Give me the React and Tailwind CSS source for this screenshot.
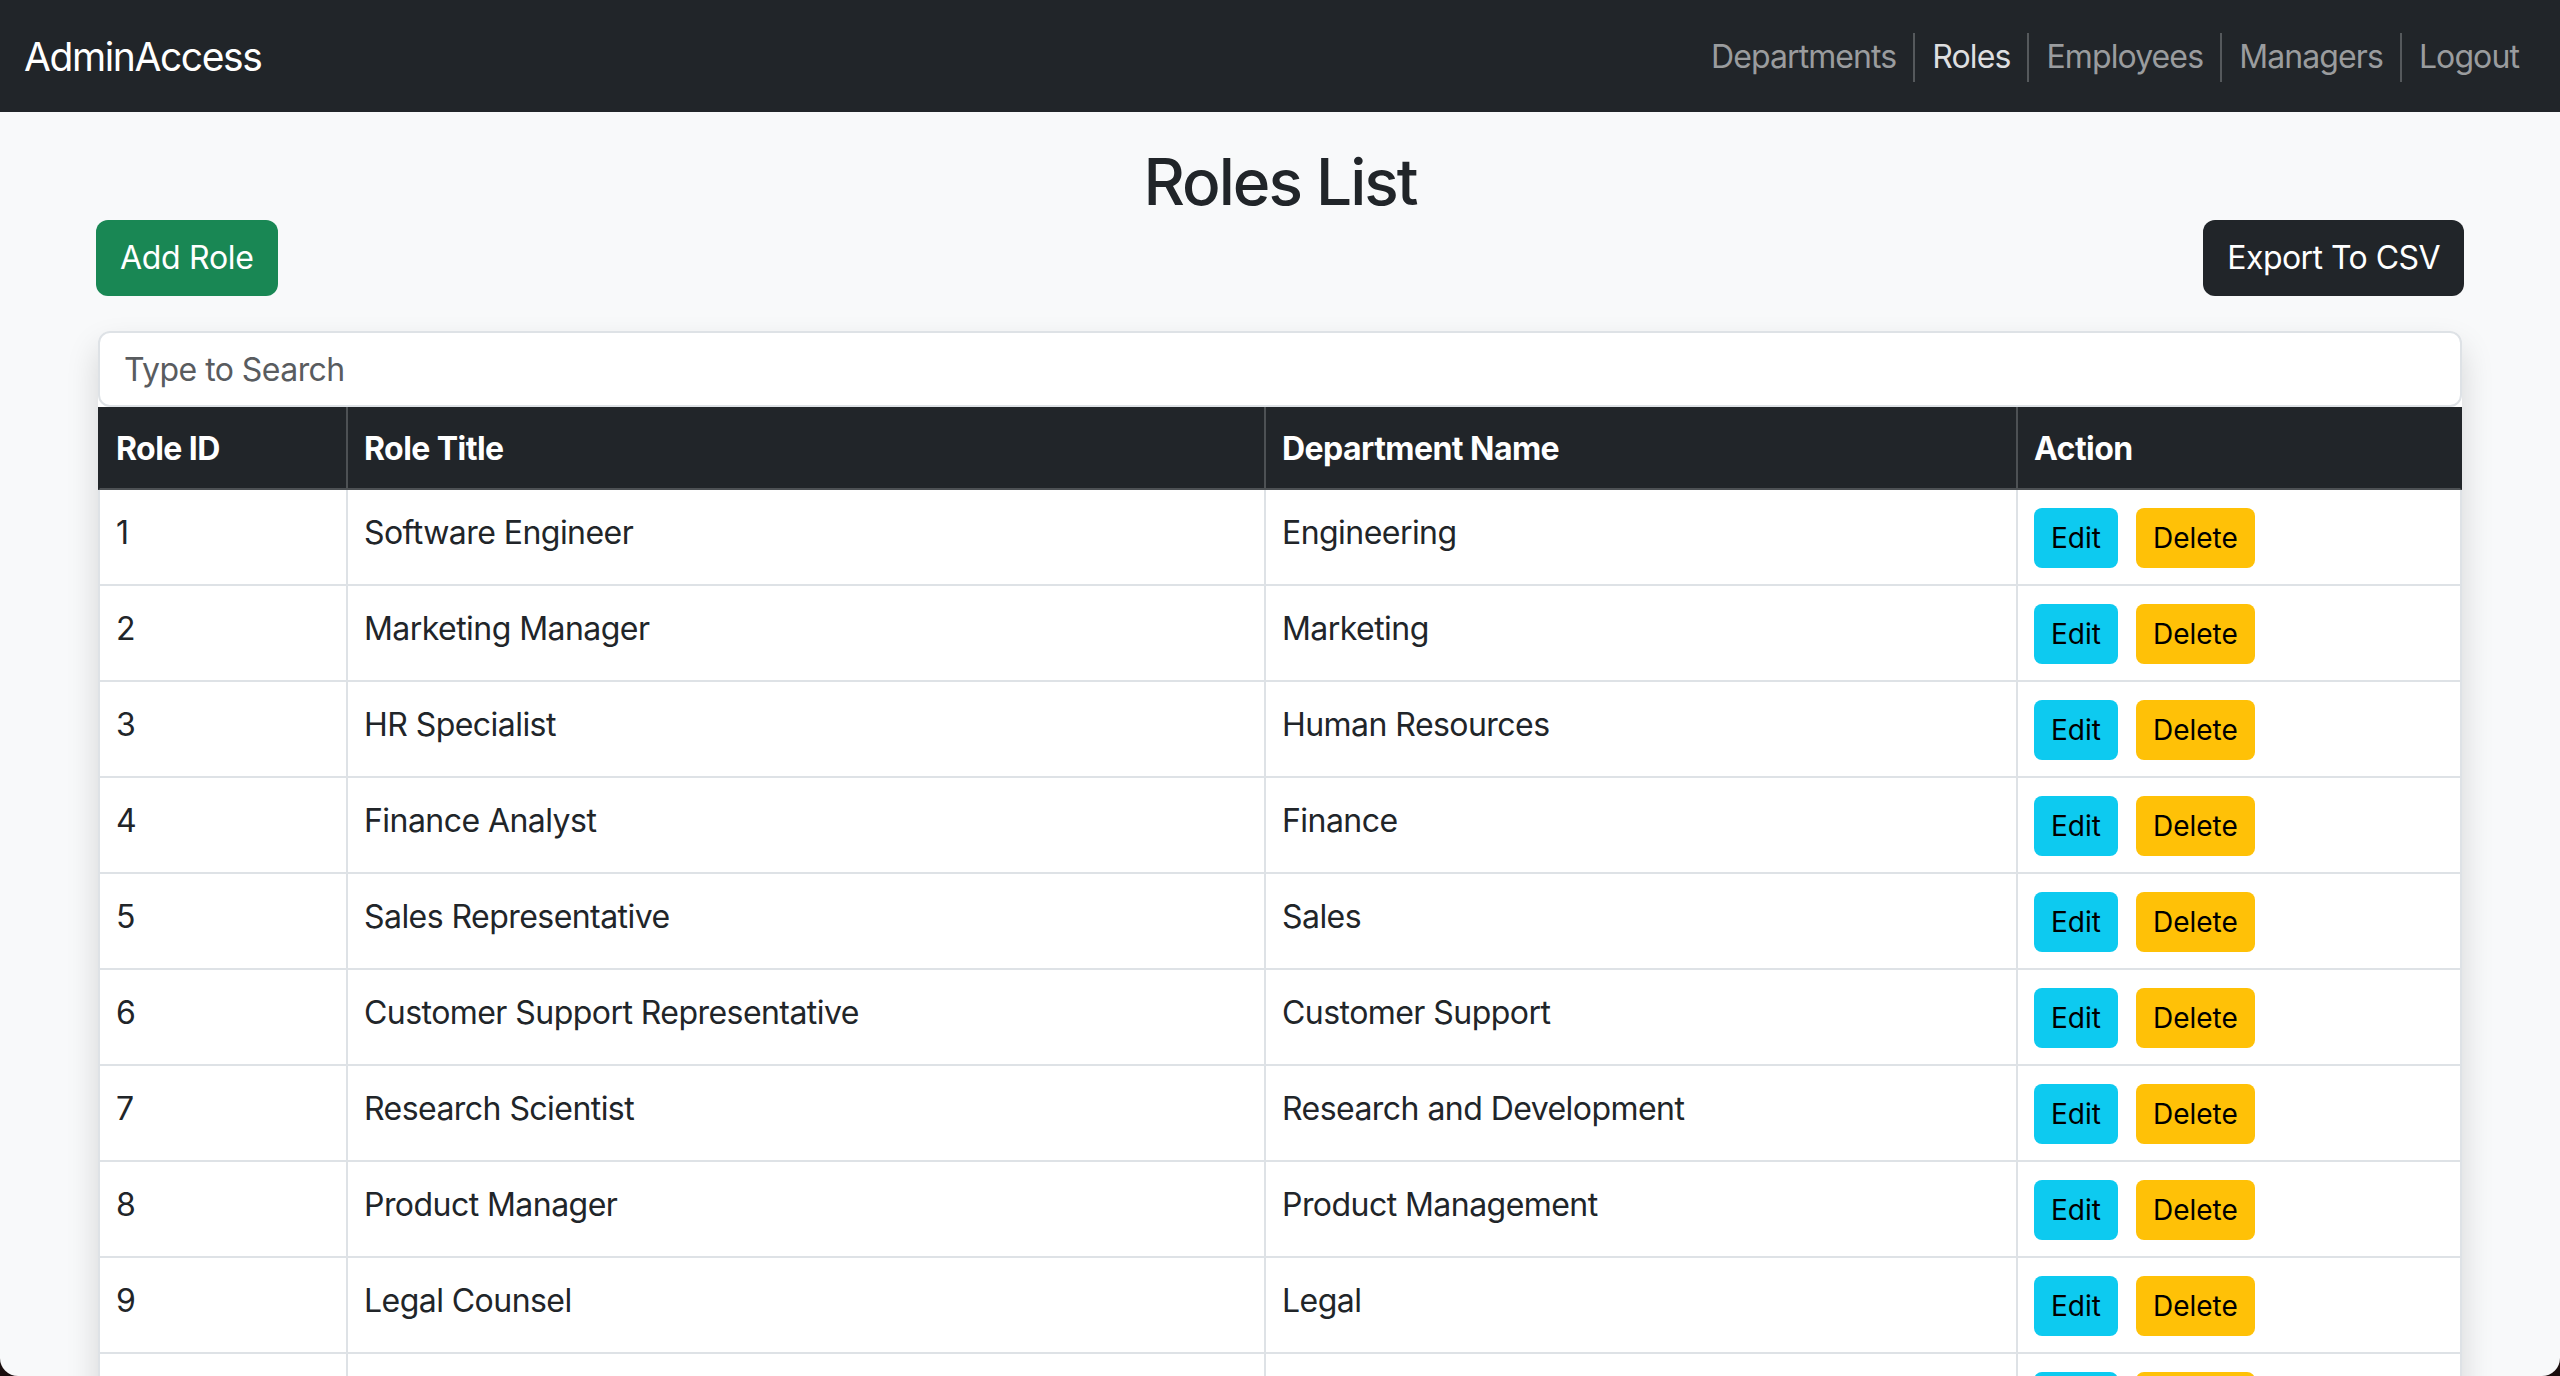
import React from "react";

const links = ["Departments", "Roles", "Employees", "Managers", "Logout"];

const roles = [
  [1, "Software Engineer", "Engineering"],
  [2, "Marketing Manager", "Marketing"],
  [3, "HR Specialist", "Human Resources"],
  [4, "Finance Analyst", "Finance"],
  [5, "Sales Representative", "Sales"],
  [6, "Customer Support Representative", "Customer Support"],
  [7, "Research Scientist", "Research and Development"],
  [8, "Product Manager", "Product Management"],
  [9, "Legal Counsel", "Legal"],
  [10, "Operations Coordinator", "Operations"],
];

const cols = "grid grid-cols-[246px_918px_752px_444px]";

export default function App() {
  return (
    <div className="h-screen overflow-hidden bg-[#1a0e0e] font-['Inter','Liberation_Sans',sans-serif] tracking-[-0.55px]">
      <div className="h-full overflow-hidden rounded-b-[18px] bg-[#f8f9fa]">
        {/* navbar */}
        <nav className="flex h-[112px] items-center justify-between bg-[#212529] px-[24px]">
          <span className="pt-[2px] text-[39px] leading-[60px] tracking-[-1.4px] text-white">AdminAccess</span>
          <ul className="flex items-center pt-[2px]">
            {links.map((l, i) => (
              <li
                key={l}
                className={`flex h-[49px] items-center ${i > 0 ? "border-l-2 border-[#55595c]" : ""}`}
              >
                <a
                  className={`px-[17px] text-[32px] leading-[48px] tracking-[-0.9px] ${
                    l === "Roles" ? "text-[#dedfe0]" : "text-[#9a9c9e]"
                  }`}
                >
                  {l}
                </a>
              </li>
            ))}
          </ul>
        </nav>

        <main className="px-[96px]">
          <h2 className="mt-[32px] text-center text-[64px] font-medium leading-[76px] tracking-[-2px] text-[#212529]">
            Roles List
          </h2>

          <div className="flex items-center justify-between">
            <button className="h-[76px] rounded-[12px] bg-[#198754] px-[24px] text-[32px] tracking-[-0.3px] text-white">
              Add Role
            </button>
            <button className="h-[76px] rounded-[12px] bg-[#212529] px-[24px] text-[32px] text-white">
              Export To CSV
            </button>
          </div>

          <div className="mx-[2px] mt-[35px] rounded-[12px] bg-white shadow-[0_16px_32px_rgba(0,0,0,0.15)]">
            <input
              className="block h-[76px] w-full rounded-[12px] border-2 border-[#dee2e6] bg-white px-[24px] text-[32px] text-[#212529] outline-none placeholder:text-[#595c5f]"
              placeholder="Type to Search"
            />

            <div className={`${cols} h-[83px] border-x-2 border-b-2 border-x-[#212529] border-b-[#4d5154] bg-[#212529] text-[32px] font-bold text-white`}>
              <div className="flex items-center px-[16px] pt-[2px]">Role ID</div>
              <div className="flex items-center border-l-2 border-[#4d5154] px-[16px] pt-[2px]">Role Title</div>
              <div className="flex items-center border-l-2 border-[#4d5154] px-[16px] pt-[2px]">Department Name</div>
              <div className="flex items-center border-l-2 border-[#4d5154] px-[16px] pt-[2px]">Action</div>
            </div>

            {roles.map(([id, title, dept]) => (
              <div
                key={id}
                className={`${cols} h-[96px] border-x-2 border-b-2 border-[#dee2e6] text-[32px] leading-[48px] text-[#212529]`}
              >
                <div className="px-[16px] pt-[19px]">{id}</div>
                <div className="border-l-2 border-[#dee2e6] px-[16px] pt-[19px]">{title}</div>
                <div className="border-l-2 border-[#dee2e6] px-[16px] pt-[19px]">{dept}</div>
                <div className="flex items-start gap-[18px] border-l-2 border-[#dee2e6] px-[16px] pt-[18px]">
                  <button className="h-[60px] rounded-[8px] bg-[#0dcaf0] px-[17px] text-[28px] leading-[42px] tracking-normal text-black">
                    Edit
                  </button>
                  <button className="h-[60px] rounded-[8px] bg-[#ffc107] px-[17px] text-[28px] leading-[42px] tracking-normal text-black">
                    Delete
                  </button>
                </div>
              </div>
            ))}
          </div>
        </main>
      </div>
    </div>
  );
}
